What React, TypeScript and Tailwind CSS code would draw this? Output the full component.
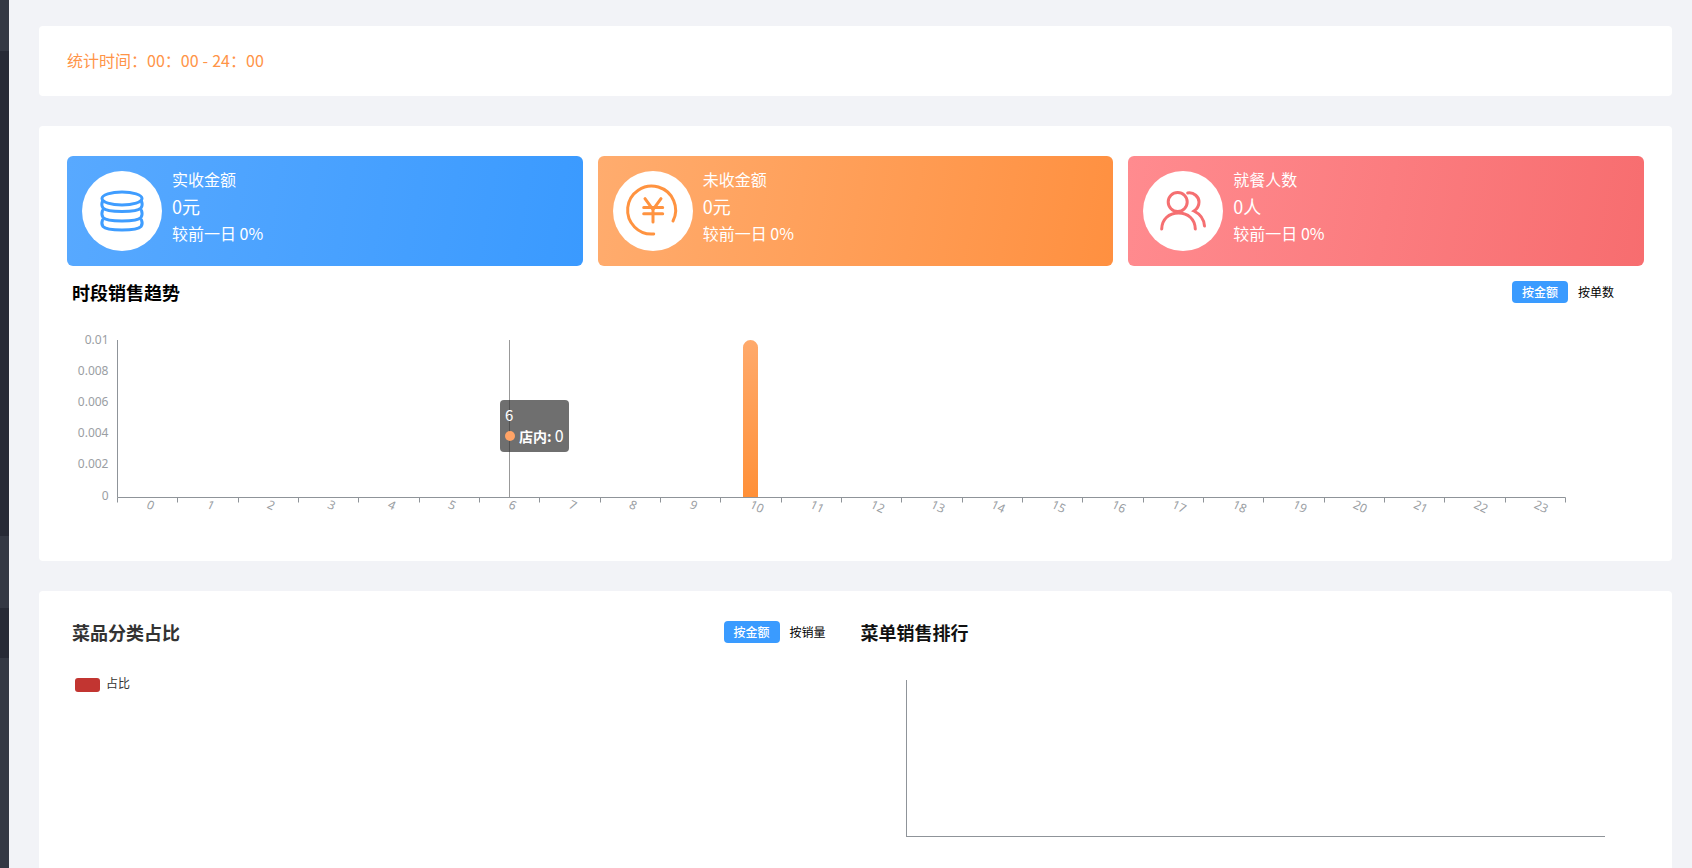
const hours = Array.from({ length: 24 }, (_, i) => i);
const yLabels = ["0.01", "0.008", "0.006", "0.004", "0.002", "0"];

const CJK = "font-['Noto_Sans_CJK_SC','Noto_Sans',sans-serif]";

function CoinsIcon() {
  return (
    <svg viewBox="0 0 80 80" className="h-20 w-20" fill="none" stroke="#3f9dff" strokeWidth="3" strokeLinecap="round">
      <ellipse cx="40" cy="27.5" rx="20" ry="6.5" />
      <path d="M20.5 30 Q19 34 21 37 C25 41.5 55 41.5 59 37 Q61 34 59.5 30" />
      <path d="M20.5 39.5 Q19 43.5 21 46.5 C25 51 55 51 59 46.5 Q61 43.5 59.5 39.5" />
      <path d="M20.5 49 Q19 53 21 55.5 C25 60 55 60 59 55.5 Q61 53 59.5 49" />
    </svg>
  );
}

function YenIcon() {
  return (
    <svg viewBox="0 0 80 80" className="h-20 w-20" fill="none" stroke="#ff9340" strokeWidth="3" strokeLinecap="round" strokeLinejoin="round">
      <path d="M40.7 63 A24 24 0 1 1 60 50" />
      <path d="M32 27.7 L40 38.7 L48 27.7 M40 38.7 V51 M30.7 36.6 H49.7 M30.7 42.8 H49.7" />
    </svg>
  );
}

function PeopleIcon() {
  return (
    <svg viewBox="0 0 80 80" className="h-20 w-20" fill="none" stroke="#f56f71" strokeWidth="3" strokeLinecap="round">
      <circle cx="34.7" cy="31" r="9.5" />
      <path d="M18.7 58 C19 48 26 42 35.5 42 C45 42 52 48 52.3 58" />
      <path d="M44.7 22 C51 21 56 26 56 31 C56 35 54 38 51 40 C57 43 61 48 61.5 55" />
    </svg>
  );
}

function StatCard({ title, value, gradient, icon }: { title: string; value: string; gradient: string; icon: React.ReactNode }) {
  return (
    <div className={`flex h-[110px] flex-1 items-center rounded-[6px] pl-[15px] text-white ${gradient}`}>
      <div className="flex h-20 w-20 shrink-0 items-center justify-center rounded-full bg-white">{icon}</div>
      <div className="mb-[10px] ml-[10px] flex flex-col">
        <div className="text-[16px] leading-[27px]">{title}</div>
        <div className="text-[18px] leading-[27px]">{value}</div>
        <div className="text-[16px] leading-[27px]">较前一日 0%</div>
      </div>
    </div>
  );
}

function SectionHeader({ title, second, titleColor }: { title: string; second?: string; titleColor: string }) {
  return (
    <div className="flex h-[22px] items-center justify-between pl-[5px] pr-5">
      <h3 className={`text-[18px] font-bold ${titleColor}`}>{title}</h3>
      {second && (
        <div className="flex text-[12px]">
          <span className="flex h-[22px] w-14 items-center justify-center rounded-[4px] bg-[#3a9bff] font-medium text-white">按金额</span>
          <span className="flex h-[22px] w-14 items-center justify-center text-black">{second}</span>
        </div>
      )}
    </div>
  );
}

function TrendChart() {
  const left = 50.5;
  const right = 1498.5;
  const top = 37;
  const bottom = 194.5;
  const step = (right - left) / 24;
  return (
    <div className="relative h-[230px]">
      <svg width="1577" height="230" className="block">
        <defs>
          <linearGradient id="barFill" x1="0" y1="0" x2="0" y2="1">
            <stop offset="0%" stopColor="#ffaa6c" />
            <stop offset="100%" stopColor="#ff9038" />
          </linearGradient>
        </defs>
        <path d={`M${left} ${top}V${bottom}H${right}`} fill="none" stroke="#8f9499" />
        {hours.map((h) => (
          <line key={h} x1={Math.floor(left + h * step) + 0.5} x2={Math.floor(left + h * step) + 0.5} y1={bottom} y2={bottom + 5} stroke="#8f9499" />
        ))}
        <line x1={right} x2={right} y1={bottom} y2={bottom + 5} stroke="#8f9499" />
        {yLabels.map((label, i) => (
          <text key={label} x="41.5" y={40.5 + i * 31.2} textAnchor="end" fontSize="12" fill="#9a9ea3" fontFamily="'Noto Sans', sans-serif">
            {label}
          </text>
        ))}
        {hours.map((h) => {
          const x = left + (h + 0.5) * step - 2;
          const y = bottom + 10;
          return (
            <text key={h} x={x} y={y} transform={`rotate(25 ${x} ${y})`} fontSize="12" fill="#9a9ea3" fontFamily="'Noto Sans', sans-serif">
              {h}
            </text>
          );
        })}
        <line x1="442.5" x2="442.5" y1={top} y2={bottom} stroke="#999999" />
        <path d="M676 194 V44.5 A7.5 7.5 0 0 1 691 44.5 V194 Z" fill="url(#barFill)" />
      </svg>
      <div className="absolute left-[433px] top-[97px] h-[52px] w-[69px] rounded-[4px] bg-[rgba(50,50,50,0.7)] px-[5px] pt-[4px] text-white">
        <div className="text-[15px] leading-[21px]">6</div>
        <div className="flex items-center text-[14px] leading-[21px]">
          <span className="mr-[4px] h-[10px] w-[10px] shrink-0 rounded-full bg-[#ffa366]" />
          <span className="whitespace-nowrap">
            <span className="font-semibold">店内:</span> <span className="text-[16px]">0</span>
          </span>
        </div>
      </div>
    </div>
  );
}

export default function App() {
  return (
    <div className={`flex h-[868px] w-[1692px] overflow-hidden bg-[#f2f3f7] ${CJK}`}>
      <aside className="flex w-[9px] shrink-0 flex-col">
        <div className="h-[51px] bg-[#343844]" />
        <div className="h-[485px] bg-[#272a36]" />
        <div className="h-[72px] bg-[#343844]" />
        <div className="h-[50px] bg-[#272a36]" />
        <div className="flex-1 bg-[#343844]" />
      </aside>

      <main className="min-w-0 flex-1 pl-[30px] pr-5 pt-[26px]">
        <section className="flex h-[70px] items-center rounded-[4px] bg-white px-7">
          <span className="pb-[2px] text-[16px] text-[#ff9447] [word-spacing:0.5px]">统计时间：00：00 - 24：00</span>
        </section>

        <section className="mt-[30px] h-[435px] rounded-[4px] bg-white px-7 pt-[30px]">
          <div className="flex gap-[15px]">
            <StatCard title="实收金额" value="0元" gradient="bg-[linear-gradient(100deg,#58a9ff,#3a9aff)]" icon={<CoinsIcon />} />
            <StatCard title="未收金额" value="0元" gradient="bg-[linear-gradient(100deg,#ffac6e,#ff9040)]" icon={<YenIcon />} />
            <StatCard title="就餐人数" value="0人" gradient="bg-[linear-gradient(100deg,#ff8b8f,#f76d6f)]" icon={<PeopleIcon />} />
          </div>
          <div className="mt-[15px]">
            <SectionHeader title="时段销售趋势" second="按单数" titleColor="text-black" />
            <TrendChart />
          </div>
        </section>

        <section className="mt-[30px] flex h-[400px] rounded-[4px] bg-white px-7 pt-[30px]">
          <div className="flex-1">
            <SectionHeader title="菜品分类占比" second="按销量" titleColor="text-[#333333]" />
            <div className="ml-2 mt-[33px] flex items-center gap-[6px]">
              <span className="h-[14px] w-[25px] rounded-[3px] bg-[#c23531]" />
              <span className="pb-[3px] text-[12px] leading-[14px] text-[#333333]">占比</span>
            </div>
          </div>
          <div className="flex-1">
            <SectionHeader title="菜单销售排行" titleColor="text-[#111111]" />
            <div className="ml-[50px] mt-[37px] h-[157px] w-[699px] border-b border-l border-[#8f9499]" />
          </div>
        </section>
      </main>
    </div>
  );
}
